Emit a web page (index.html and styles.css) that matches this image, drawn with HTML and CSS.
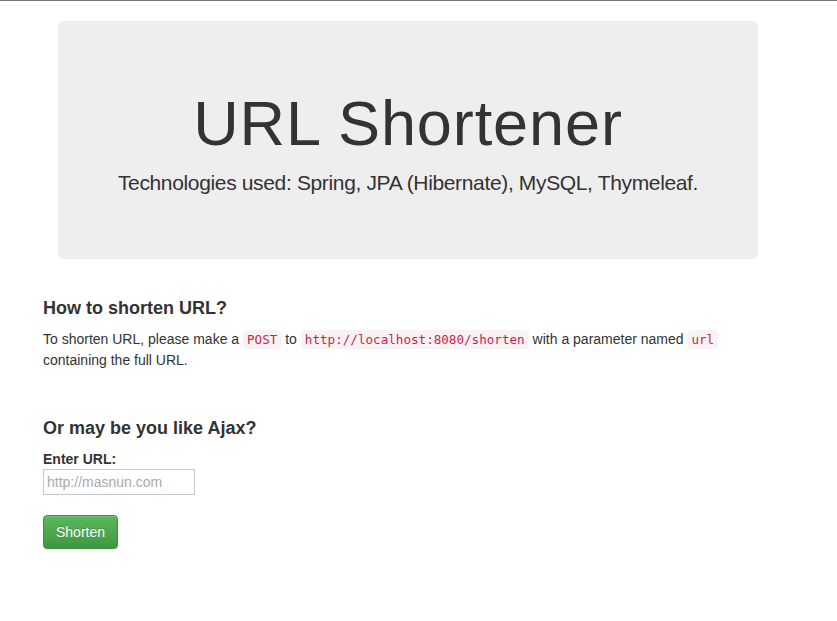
FILE: index.html
```html
<!DOCTYPE html>
<html>
<head>
<meta charset="utf-8">
<title>URL Shortener</title>
<link rel="stylesheet" href="styles.css">
</head>
<body>
<div class="container">
  <div class="jumbotron">
    <h1>URL Shortener</h1>
    <p>Technologies used: Spring, JPA (Hibernate), MySQL, Thymeleaf.</p>
  </div>
  <div class="content">
    <h4>How to shorten URL?</h4>
    <p>To shorten URL, please make a <code>POST</code> to <code>http://localhost:8080/shorten</code> with a parameter named <code>url</code> containing the full URL.</p>
    <h4 class="ajax">Or may be you like Ajax?</h4>
    <form class="form">
      <label class="label" for="url">Enter URL:</label>
      <input class="input" id="url" type="text" placeholder="http://masnun.com">
      <button class="btn" type="button">Shorten</button>
    </form>
  </div>
</div>
</body>
</html>
```

FILE: styles.css
```css
html, body {
  margin: 0;
  padding: 0;
  background: #fff;
}
body {
  border-top: 1px solid #777;
  font-family: "Liberation Sans", Arial, sans-serif;
  font-size: 14px;
  line-height: 20px;
  color: #333;
}
.container {
  padding: 20px 0 0 43px;
  width: 720px;
}
.jumbotron {
  margin-left: 15px;
  width: 700px;
  box-sizing: border-box;
  padding: 48px 30px 46px;
  background: #eeeeee;
  border-radius: 6px;
  text-align: center;
  margin-bottom: 30px;
}
.jumbotron h1 {
  margin: 20px 0 10px;
  font-size: 63px;
  line-height: 1.1;
  font-weight: 400;
  letter-spacing: 0.9px;
  color: #333;
}
.jumbotron p {
  margin: 0 0 15px;
  font-size: 21px;
  line-height: 30px;
  font-weight: 400;
  letter-spacing: -0.35px;
  white-space: nowrap;
}
.content {
  display: flow-root;
}
.content h4 {
  margin: 10px 0 10px;
  font-size: 18px;
  line-height: 1.1;
  font-weight: 700;
}
.content p {
  margin: 0 0 10px;
}
.content .ajax {
  margin-top: 49px;
}
code {
  font-family: "DejaVu Sans Mono", Menlo, monospace;
  font-size: 90%;
  padding: 2px 4px;
  color: #c7254e;
  background: #f9f2f4;
  border-radius: 4px;
}
.form {
  display: flex;
  flex-direction: column;
  align-items: flex-start;
}
.label {
  font-weight: 700;
  line-height: 20px;
}
.input {
  width: 152px;
  height: 26px;
  box-sizing: border-box;
  border: 1px solid #c8c8c8;
  padding: 0 3px;
  margin: 0;
  font-family: "Liberation Sans", Arial, sans-serif;
  font-size: 14px;
  color: #555;
}
.input::placeholder {
  color: #a9a9a9;
}
.btn {
  margin-top: 20px;
  height: 34px;
  padding: 6px 12px;
  font-family: "Liberation Sans", Arial, sans-serif;
  font-size: 14px;
  line-height: 20px;
  color: #fff;
  border: 1px solid #3e8f3e;
  border-radius: 4px;
  background-image: linear-gradient(to bottom, #5cb85c 0, #419641 100%);
  text-shadow: 0 -1px 0 rgba(0,0,0,.2);
  box-shadow: inset 0 1px 0 rgba(255,255,255,.15), 0 1px 1px rgba(0,0,0,.075);
}
```
